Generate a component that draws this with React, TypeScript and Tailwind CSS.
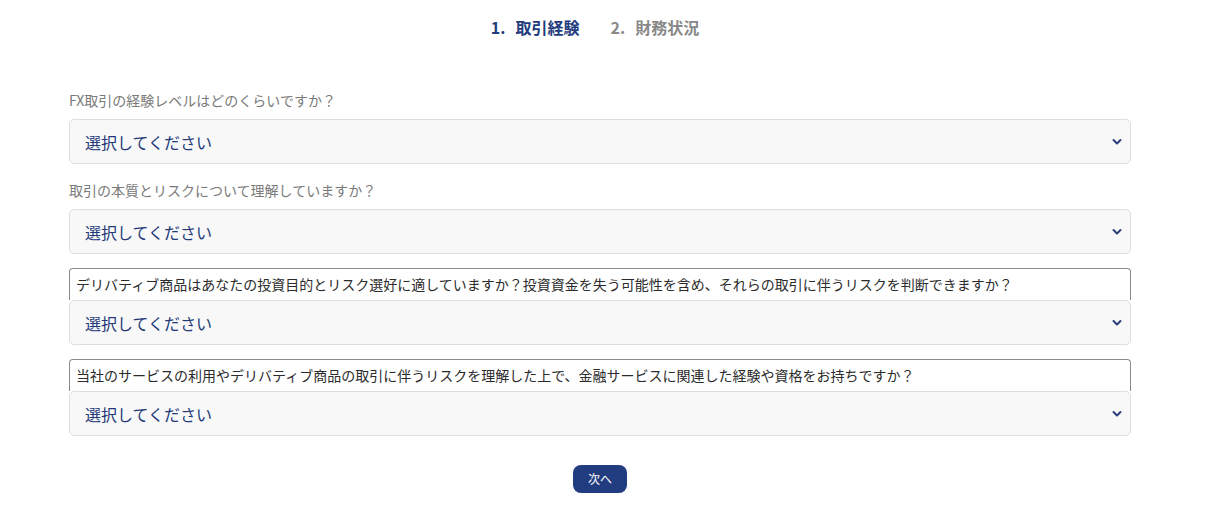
import React from "react";

const font = { fontFamily: '"Noto Sans CJK JP", "Noto Sans", sans-serif' };

function Chevron() {
  return (
    <svg
      className="pointer-events-none absolute right-[9px] top-1/2 -translate-y-1/2"
      width="10"
      height="7"
      viewBox="0 0 10 7"
      fill="none"
    >
      <path d="M1.5 1.5 L5 5 L8.5 1.5" stroke="#2a3d78" strokeWidth="2" strokeLinecap="round" strokeLinejoin="round" />
    </svg>
  );
}

function Select() {
  return (
    <div className="relative">
      <select
        className="block h-[45px] w-full appearance-none rounded-[5px] border border-[#dedede] bg-[#f8f8f9] pl-[15px] text-[16px] text-[#243a78] outline-none"
        style={font}
        defaultValue=""
      >
        <option value="">選択してください</option>
      </select>
      <Chevron />
    </div>
  );
}

function Labeled({ label }: { label: string }) {
  return (
    <div className="flex flex-col">
      <div className="h-[20px] text-[14px] leading-[20px] text-[#7a7a7a]">{label}</div>
      <div className="mt-[9px]">
        <Select />
      </div>
    </div>
  );
}

function Boxed({ label }: { label: string }) {
  return (
    <div className="flex flex-col">
      <div className="flex h-[32px] items-center rounded-t-[4px] border-x border-t border-[#8a8a8a] pl-[6px] text-[14px] text-[#2b2b2b]">
        {label}
      </div>
      <Select />
    </div>
  );
}

export default function App() {
  return (
    <div className="min-h-[517px] w-[1200px] bg-white px-[69px]" style={font}>
      <div className="flex h-[56px] items-center justify-center gap-[31px] pb-[3px] pr-[10px] text-[16px] font-bold">
        <div className="text-[#233c7d]">
          1.<span className="ml-[10px]">取引経験</span>
        </div>
        <div className="text-[#888888]">
          2.<span className="ml-[10px]">財務状況</span>
        </div>
      </div>
      <div className="mt-[34px] flex flex-col">
        <Labeled label="FX取引の経験レベルはどのくらいですか？" />
        <div className="mt-[16px]">
          <Labeled label="取引の本質とリスクについて理解していますか？" />
        </div>
        <div className="mt-[14px]">
          <Boxed label="デリバティブ商品はあなたの投資目的とリスク選好に適していますか？投資資金を失う可能性を含め、それらの取引に伴うリスクを判断できますか？" />
        </div>
        <div className="mt-[14px]">
          <Boxed label="当社のサービスの利用やデリバティブ商品の取引に伴うリスクを理解した上で、金融サービスに関連した経験や資格をお持ちですか？" />
        </div>
        <div className="mt-[29px] flex justify-center">
          <button className="h-[28px] w-[54px] rounded-[8px] bg-[#223c80] text-[12px] text-white">
            次へ
          </button>
        </div>
      </div>
    </div>
  );
}
